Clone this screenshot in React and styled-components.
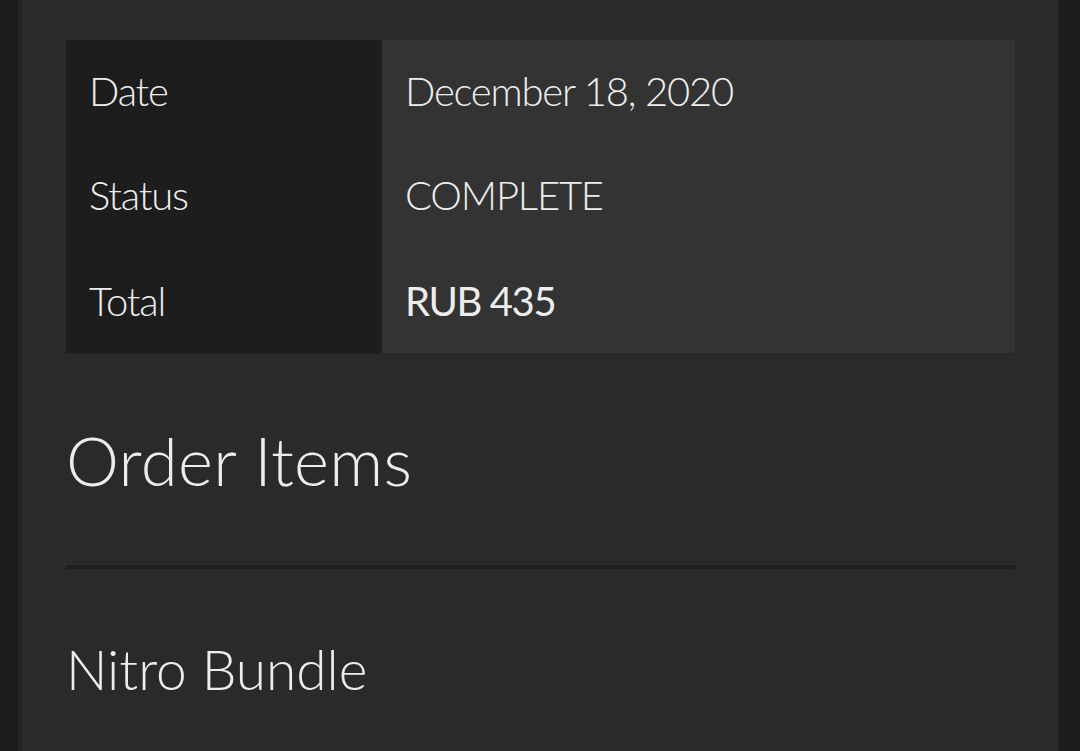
import styled, { createGlobalStyle } from 'styled-components'

const GlobalStyle = createGlobalStyle`
  html, body {
    margin: 0;
    padding: 0;
    background: #1c1c1c;
    font-family: Lato, "Open Sans", sans-serif;
    color: #ededed;
  }
`

const Page = styled.div`
  min-height: 751px;
  padding: 0 20px 0 18px;
  box-sizing: border-box;
  overflow: hidden;
`

const Panel = styled.main`
  min-height: 751px;
  background: #2a2a2a;
  border-left: 4px solid #222;
  border-right: 2px solid #202020;
  padding: 40px 43px 40px 44px;
  box-sizing: border-box;
`

const Table = styled.div`
  display: grid;
  grid-template-columns: 316px 1fr;
  grid-template-rows: repeat(3, 1fr);
  height: 314px;
  border-right: 1px solid #2f2f2f;
  border-bottom: 1px solid #262626;
  box-sizing: border-box;
`

const Cell = styled.div`
  display: flex;
  align-items: center;
  padding: ${(props) => props.shift || 0}px 23px 3px;
  background: ${(props) => (props.head ? '#1d1d1d' : '#333333')};
  font-size: 40px;
  font-weight: ${(props) => (props.strong ? 400 : 300)};
  letter-spacing: ${(props) => (props.strong ? '-1.4px' : '-1.2px')};
  line-height: 1.2;
`

const Heading = styled.h2`
  margin: 66px 0 0;
  font-size: 67px;
  font-weight: 300;
  letter-spacing: 0.3px;
  line-height: 1.2;
`

const Divider = styled.hr`
  margin: 64px 0 0;
  height: 0;
  border: 0;
  border-top: 1px solid #2e2e2e;
  border-bottom: 4px solid #1f1f1f;
`

const ItemName = styled.h3`
  margin: 67px 0 0;
  font-size: 55px;
  font-weight: 300;
  line-height: 1.2;
`

const rows = [
  { label: 'Date', value: 'December 18, 2020', shift: 0 },
  { label: 'Status', value: 'COMPLETE', shift: 1 },
  { label: 'Total', value: 'RUB 435', strong: true, shift: 3 },
]

const App = () => {
  return (
    <>
      <GlobalStyle />
      <Page>
        <Panel>
          <Table>
            {rows.map((row) => [
              <Cell head shift={row.shift} key={row.label + '-l'}>
                {row.label}
              </Cell>,
              <Cell key={row.label + '-v'} shift={row.shift} strong={row.strong}>
                {row.value}
              </Cell>,
            ])}
          </Table>
          <Heading>Order Items</Heading>
          <Divider />
          <ItemName>Nitro Bundle</ItemName>
        </Panel>
      </Page>
    </>
  )
}

export default App
